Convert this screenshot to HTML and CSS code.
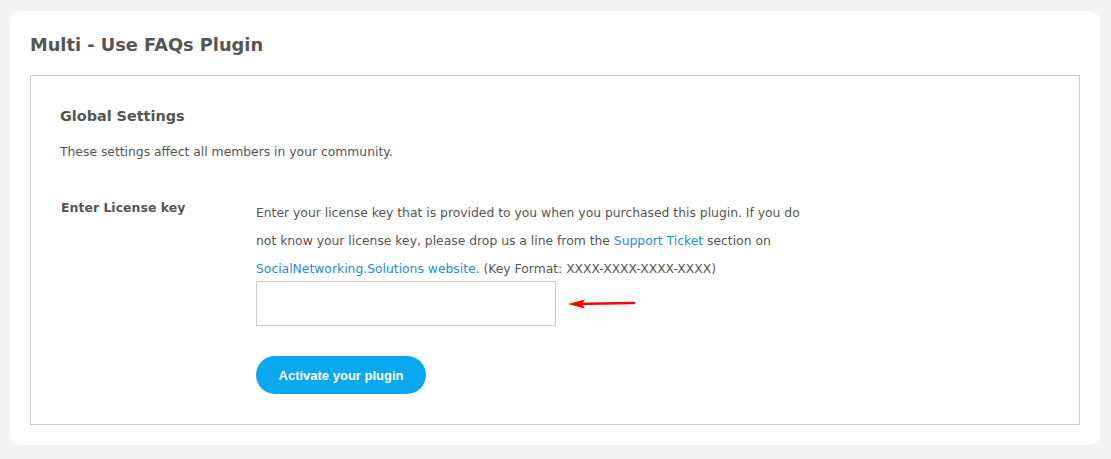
FILE: index.html
```html
<!DOCTYPE html>
<html lang="en">
<head>
    <meta charset="UTF-8">
    <meta name="viewport" content="width=device-width, initial-scale=1.0">
    <title>Multi - Use FAQs Plugin</title>
    <link rel="stylesheet" href="styles.css">
</head>
<body>

    <div class="card">
        <h1>Multi - Use FAQs Plugin</h1>

        <div class="settings-box">
            <h3>Global Settings</h3>
            <p class="intro">These settings affect all members in your community.</p>

            <div class="form-row">
                <label class="row-label" for="licenseKey">Enter License key</label>
                <div class="row-field">
                    <p class="hint">
                        Enter your license key that is provided to you when you purchased this plugin. If you do
                        not know your license key, please drop us a line from the <a href="#">Support Ticket</a> section on
                        <a href="#">SocialNetworking.Solutions website</a>. (Key Format: XXXX-XXXX-XXXX-XXXX)
                    </p>
                    <div class="key-line">
                        <input type="text" id="licenseKey">
                        <svg class="arrow" width="70" height="12" viewBox="0 0 70 12">
                            <path d="M6 6 L67 5" stroke="#f00" stroke-width="2.5" stroke-linecap="round"/>
                            <path d="M1 6 L18 1.5 L15 6 L18 10.5 Z" fill="#f00"/>
                        </svg>
                    </div>
                    <button class="activate-btn">Activate your plugin</button>
                </div>
            </div>
        </div>
    </div>

</body>
</html>
```

FILE: styles.css
```css
* {
    margin: 0;
    padding: 0;
    box-sizing: border-box;
}
body {
    font-family: "DejaVu Sans", Tahoma, sans-serif;
    background-color: #f3f3f3;
    color: #555;
    padding: 11px 11px 15px 10px;
}
.card {
    background-color: white;
    border-radius: 10px;
    padding: 20px 20px 20px 20px;
}
h1 {
    font-size: 17.8px;
    font-weight: bold;
    color: #555;
    line-height: 28px;
    margin-bottom: 16px;
}
.settings-box {
    border: 1px solid #ccc;
    padding: 28px 29px 29px 29px;
    min-height: 350px;
}
h3 {
    font-size: 14.4px;
    font-weight: bold;
    line-height: 24px;
    margin-bottom: 15px;
}
.intro {
    font-size: 12.35px;
    line-height: 18px;
}
.form-row {
    display: flex;
    margin-top: 38px;
}
.row-label {
    width: 196px;
    font-size: 12.5px;
    font-weight: bold;
    line-height: 18px;
    padding-left: 1px;
}
.row-field {
    width: 560px;
}
.hint {
    width: 552px;
    font-size: 12.35px;
    line-height: 28px;
}
.hint a {
    color: #1d8fd2;
    text-decoration: none;
}
.key-line {
    display: flex;
    align-items: center;
    margin-top: -2px;
}
input {
    width: 300px;
    height: 45px;
    border: 1px solid #ccc;
    padding: 0 10px;
    font-size: 13px;
}
.arrow {
    margin-left: 11px;
}
.activate-btn {
    display: block;
    margin-top: 30px;
    width: 170px;
    height: 38px;
    border: none;
    border-radius: 19px;
    background-color: #0aa8f0;
    color: white;
    font-family: "Liberation Sans", Arial, sans-serif;
    font-size: 13px;
    font-weight: bold;
    cursor: pointer;
}
```
